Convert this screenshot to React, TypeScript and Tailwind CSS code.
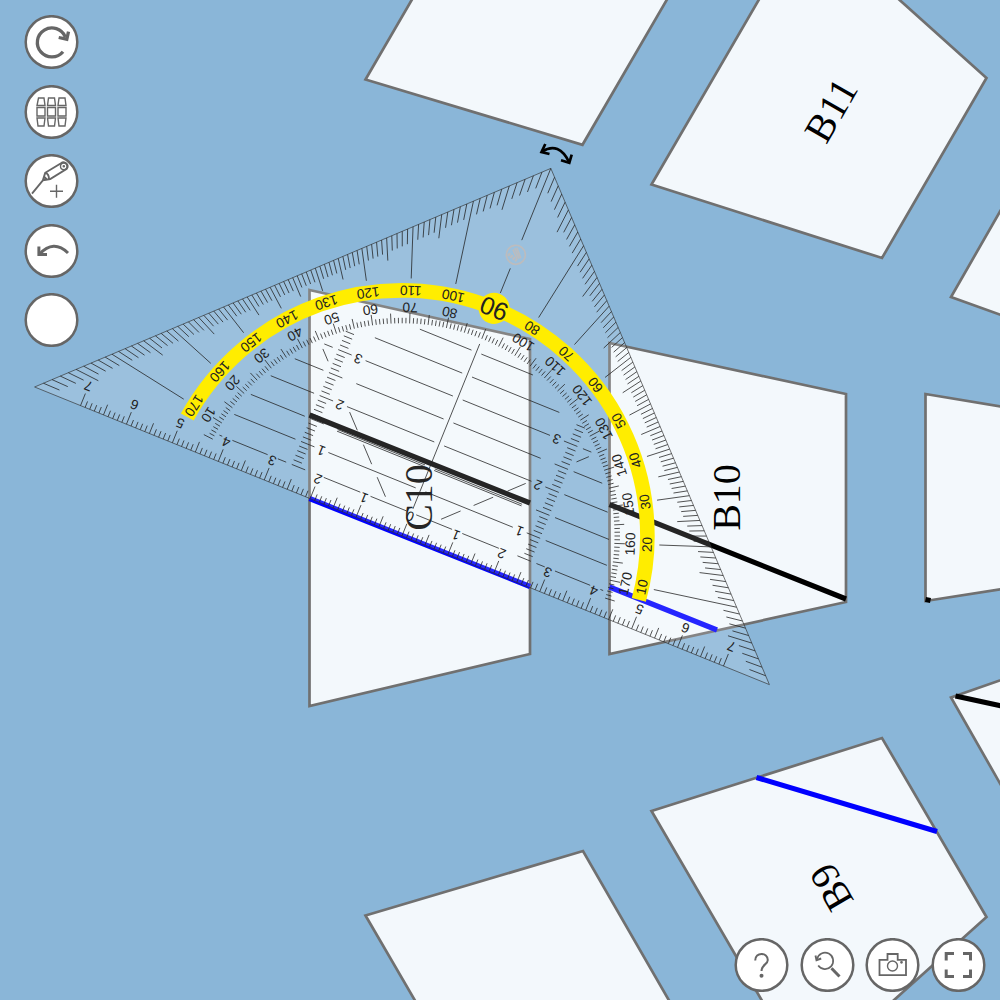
import React from "react";

const UNIT = 49.55;
const HALF = 396.4;
const ANGLE = 22.05;

const rad = (deg: number) => (deg * Math.PI) / 180;
const polar = (r: number, deg: number): [number, number] => [r * Math.cos(rad(deg)), -r * Math.sin(rad(deg))];
const seg = (x1: number, y1: number, x2: number, y2: number) =>
  `M${x1.toFixed(2)} ${y1.toFixed(2)}L${x2.toFixed(2)} ${y2.toFixed(2)}`;
const radial = (r1: number, r2: number, deg: number) => {
  const [a, b] = polar(r1, deg);
  const [c, d] = polar(r2, deg);
  return seg(a, b, c, d);
};

function rulerTicks() {
  let d = "";
  for (let i = -70; i <= 70; i++) {
    const x = (i * UNIT) / 10;
    const len = i % 10 === 0 ? 13 : i % 5 === 0 ? 11 : 6.5;
    d += seg(x, 0, x, -len);
  }
  return d;
}

function edgeTicks() {
  let d = "";
  for (let a = 1; a < 180; a++) {
    const edge = HALF / (Math.abs(Math.cos(rad(a))) + Math.sin(rad(a)));
    const b = a > 90 ? 180 - a : a;
    const t = Math.abs(b - 45) / 45;
    if (a === 90) {
      d += seg(0, -HALF, 0, -319) + seg(0, -288.5, 0, -262);
    } else if (a % 10 === 0) {
      d += radial(edge, 257.5, a);
    } else if (a % 5 === 0) {
      d += radial(edge, edge - 20.5 - 5 * t, a);
    } else {
      d += radial(edge, edge - 12.5 - 5 * t, a);
    }
  }
  return d;
}

function innerTicks() {
  let d = "";
  for (let a = 5; a <= 175; a++) {
    const len = a % 10 === 0 ? 10.5 : a % 5 === 0 ? 10 : 5.5;
    d += radial(212.5, 212.5 + len, a);
  }
  return d;
}

function gridLines() {
  let d = "";
  for (const s of [-1, 1]) {
    for (let n = 2; n <= 8; n++) {
      const y = -(n * UNIT) / 2;
      d += seg(s * 5.3, y, s * (n === 8 ? 61 : 99.5), y);
      if (n <= 6) d += seg(s * 135, y, s * Math.sqrt(207 * 207 - y * y), y);
    }
    d += seg(s * 5.3, -72.6, s * 99.5, -72.6);
    const base = -UNIT / 2;
    for (const [a, b] of [[5.3, 44], [55, 94.5], [135, 144], [155, 193], [204, 207]]) {
      d += seg(s * a, base, s * b, base);
    }
    for (const [a, b] of [[30, 45], [55, 70], [81, 95], [134, 143.5]]) {
      d += seg(s * a, -a, s * b, -b);
    }
    for (let i = 5; i <= 34; i++) {
      const y = (-i * UNIT) / 10;
      d += seg(s * 129, y, s * (i % 5 === 0 ? 114.5 : 120), y);
    }
  }
  d += seg(0, -29, 0, -207);
  return d;
}

const panels = [
  "418,-10 366,79.5 583,144.8 673,-10",
  "765,-10 652,184.5 882.5,258 987,78 889,-10",
  "1010,195 951.5,297 1010,318",
  "310,290 530.5,339 530.5,654 310,706",
  "610,343 846.5,394 846.5,602 610,654",
  "1010,408 926,394 926,601 1010,588",
  "1010,677 951.5,697.5 1010,800",
  "652,811 882.5,738 987,917 889,1005 765,1005",
  "366,915.5 583.5,851 675,1010 421,1010",
];

const Label = ({ x, y, rot, size, children }: { x: number; y: number; rot: number; size: number; children: React.ReactNode }) => (
  <text transform={`translate(${x} ${y}) rotate(${rot})`} y={size * 0.35} textAnchor="middle" fontSize={size}>
    {children}
  </text>
);

function SetSquare() {
  const [ax, ay] = polar(245.4, 173.1);
  const [bx, by] = polar(245.4, 6.9);
  const degrees = Array.from({ length: 17 }, (_, i) => (i + 1) * 10);
  return (
    <g transform={`translate(402.3 535.8) rotate(${ANGLE})`} fill="#222" fontFamily="'Liberation Sans', Arial, sans-serif">
      <path d={`M${-HALF} 0H${HALF}L0 ${-HALF}Z`} fill="#fff" fillOpacity={0.145} stroke="#333" strokeWidth={0.6} />
      <path d={rulerTicks() + edgeTicks() + innerTicks() + gridLines()} stroke="#222" strokeWidth={0.7} fill="none" />
      <path d={`M${ax} ${ay}A245.4 245.4 0 0 1 ${bx} ${by}`} stroke="#ffed00" strokeWidth={14.6} fill="none" />
      <circle cx={0} cy={-245.4} r={15.5} fill="#ffed00" />
      {degrees.map((a) => {
        const [x, y] = polar(245.2, a);
        return (
          <Label key={a} x={x} y={y} rot={270 - a} size={a === 90 ? 25 : 13.7}>
            {a}
          </Label>
        );
      })}
      {degrees
        .filter((a) => a !== 90)
        .map((a) => {
          const [x, y] = polar(228.3, a);
          return (
            <Label key={a} x={x} y={y} rot={270 - a} size={13.7}>
              {180 - a}
            </Label>
          );
        })}
      {[-7, -6, -5, -4, -3, -2, -1, 0, 1, 2, 3, 4, 5, 6, 7].map((n) => (
        <Label key={n} x={n * UNIT} y={-21} rot={180} size={13.7}>
          {Math.abs(n)}
        </Label>
      ))}
      {[-1, 1].map((s) =>
        [1, 2, 3].map((n) => (
          <Label key={`${s}-${n}`} x={s * 107} y={-n * UNIT + 1} rot={180} size={13.7}>
            {n}
          </Label>
        )),
      )}
      <g transform="translate(0 -303.2) rotate(16)" stroke="#bcbcbe" fill="none">
        <circle r={9.5} strokeWidth={1.7} />
        <path d="M-5-4.500L5 1M-3.500-6L6 -.5M-5.500-2.300L3.500 2.500" strokeWidth={1.6} />
        <path d="M-6.500 4H4.500" strokeWidth={3.4} strokeDasharray="2.2 .8" />
      </g>
    </g>
  );
}

function Workspace() {
  return (
    <svg className="block h-full w-full" viewBox="0 0 1000 1000">
      <g transform="translate(-0.5 0)">
        <g fill="#f3f8fc" stroke="#707070" strokeWidth={2.7}>
          {panels.map((p) => (
            <polygon key={p} points={p} />
          ))}
        </g>
        <g strokeWidth={5.2}>
          <path d="M310 415L530.500 503M610 504.500L846.500 599M956 696L1005 706.500" stroke="#000" />
          <path d="M926 599.500L931 600.500" stroke="#000" />
          <path d="M310 498.500L530.500 586.500M610 587L717.500 630M757 777.500L937.500 831.500" stroke="#00f" />
        </g>
        <g fontFamily="'Liberation Serif', 'Times New Roman', serif" fill="#000">
          <Label x={418.6} y={497.5} rot={-90} size={40}>C10</Label>
          <Label x={726.6} y={497.5} rot={-90} size={40}>B10</Label>
          <Label x={831} y={110} rot={-60} size={40}>B11</Label>
          <Label x={831.3} y={887.5} rot={-120} size={40}>B9</Label>
        </g>
      </g>
      <g transform="translate(-0.3 0)">
        <SetSquare />
      </g>
      <g stroke="#000" strokeWidth={2.7} fill="none">
        <path d="M542 151.500Q559 141 569.300 162.500" />
        <path d="M545.300 144L541.500 152L549.500 154M571.700 154.500L569.300 162.800L561 160.300" />
      </g>
    </svg>
  );
}

const CircleButton = ({ label, children }: { label: string; children?: React.ReactNode }) => (
  <button aria-label={label} className="h-[54px] w-[55px] shrink-0">
    <svg className="block h-[54px] w-[55px]" viewBox="-27.5 -27 55 54" fill="none" stroke="#666" strokeWidth={1.4}>
      <circle r={25.8} fill="#fff" strokeWidth={2.5} />
      {children}
    </svg>
  </button>
);

export default function App() {
  return (
    <main className="relative h-[1000px] w-[1000px] overflow-hidden bg-[#8ab6d8]">
      <Workspace />
      <nav className="absolute top-[15px] left-[24px] flex flex-col gap-[15.5px]">
        <CircleButton label="Rotate">
          <path d="M11.500 9.700A14.500 14.500 0 1 1 13.800-5" strokeWidth={3.3} />
          <path d="M17-10.300L15.300-2.800L7.200-4.500" strokeWidth={3.3} />
        </CircleButton>
        <CircleButton label="Arrange">
          <path d="M-13-14H-7.500L-6.500-6.500H-14.500ZM-3-14H3L4-6.500H-4ZM7.500-14H13.500L14.500-6.500H6.500Z" />
          <path d="M-14.500-4.500H-6.500V4H-14.500ZM-4-4.500H4V4H-4ZM6.500-4.500H14.500V4H6.500Z" />
          <path d="M-14.500 6H-6.500L-7.500 14H-13.500ZM-4 6H4L3 14H-3ZM6.500 6H14.500L13.500 14H7.500Z" />
        </CircleButton>
        <CircleButton label="Draw line">
          <path d="M-19.500 12.700L-8.600-.7L-6.300-8.200L9.500-17.700A4 4 0 0 1 15.300-12.300L-1.300-2L-8.600-.7M-6.300-8.200C-3.500-7.500-2.500-5-2.500-2.200M-7.500-4C-6-3.500-5.500-2.500-5-1.500" strokeWidth={1.9} />
          <circle cx={12.3} cy={-14.7} r={3.3} />
          <circle cx={12.3} cy={-14.7} r={0.6} />
          <path d="M-1.500 10.300H11.500M5 3.800V16.800" />
        </CircleButton>
        <CircleButton label="Undo">
          <path d="M16.500 2Q2-12-12 3.200" strokeWidth={3} />
          <path d="M-12.600-4.500V3.600H-4.500" strokeWidth={3} />
        </CircleButton>
        <CircleButton label="Color" />
      </nav>
      <nav className="absolute top-[938px] left-[734px] flex gap-[10.5px]">
        <CircleButton label="Help">
          <path d="M-6.300-4.500C-6.300-13.200 6.300-13.200 6.300-5C6.300-.500 0-.500 0 6" strokeWidth={2} />
          <circle cy={10.7} r={1} strokeWidth={2} />
        </CircleButton>
        <CircleButton label="Reset zoom">
          <path d="M-10.500-6A8.200 8.200 0 1 1-9.300 .5" strokeWidth={1.7} />
          <path d="M-12-9.500L-11-4.800L-6.300-6.500" strokeWidth={1.9} />
          <path d="M4 3.200L12 11.500" strokeWidth={3} />
        </CircleButton>
        <CircleButton label="Screenshot">
          <path d="M-13-5.200H-5V-11H5.200V-5.200H13.500V10.200H-13Z" strokeWidth={1.8} />
          <circle cy={1} r={5} />
          <circle cx={9} cy={-2.7} r={0.7} />
        </CircleButton>
        <CircleButton label="Fullscreen">
          <path d="M-12.300-4.500V-11.500H-4.500M4.500-11.500H12V-4.500M12 4.500V11.500H4.500M-4.500 11.500H-12.300V4.500" strokeWidth={3} />
        </CircleButton>
      </nav>
    </main>
  );
}
